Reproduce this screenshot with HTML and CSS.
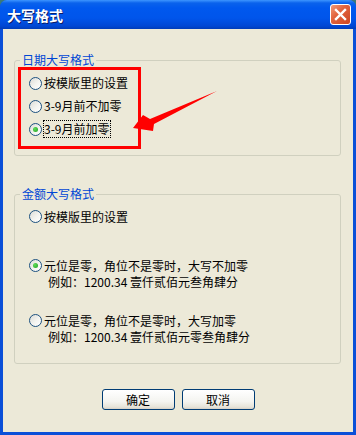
FILE: index.html
```html
<!DOCTYPE html>
<html lang="zh-CN">
<head>
  <meta charset="UTF-8">
  <title>大写格式</title>
  <link rel="stylesheet" href="styles.css">
</head>
<body>
  <div class="window">
    <div class="titlebar">
      <span class="title">大写格式</span>
      <span class="close-btn">
        <svg width="21" height="21" viewBox="0 0 21 21"><path d="M6 6 L15 15 M15 6 L6 15" stroke="#fff" stroke-width="2.4" stroke-linecap="square"/></svg>
      </span>
    </div>
    <div class="client">
      <!-- 日期 -->
      <fieldset class="group group-date">
        <legend>日期大写格式</legend>
        <div class="mark-box">
          <div class="row"><span class="radio"></span><span>按模版里的设置</span></div>
          <div class="row"><span class="radio"></span><span>3-9月前不加零</span></div>
          <div class="row"><span class="radio checked"></span><span class="focus">3-9月前加零</span></div>
        </div>
      </fieldset>
      <!-- 金额 -->
      <fieldset class="group group-money">
        <legend>金额大写格式</legend>
        <div class="money-row"><span class="radio"></span><div class="lines"><div>按模版里的设置</div></div></div>
        <div class="money-row"><span class="radio checked"></span><div class="lines"><div>元位是零，角位不是零时，大写不加零</div><div class="example">例如：1200.34 壹仟贰佰元叁角肆分</div></div></div>
        <div class="money-row"><span class="radio"></span><div class="lines"><div>元位是零，角位不是零时，大写加零</div><div class="example">例如：1200.34 壹仟贰佰元零叁角肆分</div></div></div>
      </fieldset>
      <div class="buttons">
        <button class="btn">确定</button>
        <button class="btn">取消</button>
      </div>
    </div>
    <svg class="arrow" width="356" height="435" viewBox="0 0 356 435">
      <polygon points="217,91 150,119 143,115 133,128 153,131 154,124" fill="#ff0000"/>
    </svg>
  </div>
</body>
</html>
```

FILE: styles.css
```css
body {
  margin: 0;
  background: #3b7a78;
  font-family: "Noto Sans CJK SC", "Liberation Sans", sans-serif;
  font-size: 12px;
  color: #000;
}
.window {
  position: relative;
  width: 356px;
  height: 435px;
  display: flex;
  flex-direction: column;
  background: #0a4fd8;
  border-radius: 7px 7px 0 0;
  overflow: hidden;
}
.titlebar {
  height: 29px;
  display: flex;
  align-items: center;
  justify-content: space-between;
  padding: 0 5px 0 7px;
  background: linear-gradient(to bottom, #3d95ff 0, #0a62ec 3px, #0058ee 8px, #0055eb 18px, #0047d4 26px, #003cb8 29px);
}
.title {
  color: #fff;
  font-weight: bold;
  font-size: 14px;
  text-shadow: 1px 1px 0 #0a1e6a;
}
.close-btn {
  width: 21px;
  height: 21px;
  box-sizing: border-box;
  border: 1px solid #fff;
  border-radius: 3px;
  background: linear-gradient(135deg, #f29a78 0%, #e2643e 40%, #cc4522 100%);
  display: flex;
  align-items: center;
  justify-content: center;
}
.close-btn svg { display: block; margin: -1px; }
.client {
  flex: 1;
  margin: 0 3px 3px 3px;
  background: #ece9d8;
  display: flex;
  flex-direction: column;
}
.group {
  margin: 0 12px 0 11px;
  padding: 0 0 6px 3px;
  border: 1px solid #d0d0bf;
  border-radius: 3px;
  min-width: 0;
}
.group legend {
  margin-left: 2px;
  padding: 0 2px;
  line-height: 14px;
  color: #0046d5;
}
.group-date { margin-top: 24px; }
.group-money {
  margin-top: 31px;
  padding-bottom: 18px;
}
.mark-box {
  width: 123px;
  box-sizing: border-box;
  border: 3px solid #ff0000;
  padding: 4px 0 8px 8px;
  display: flex;
  flex-direction: column;
  gap: 5px;
}
.row {
  display: flex;
  align-items: center;
  gap: 2px;
  height: 18px;
  line-height: 18px;
}
.focus {
  outline: 1px dotted #000;
  outline-offset: -1px;
  padding: 0 1px;
  margin-left: -1px;
}
.radio {
  flex: none;
  width: 13px;
  height: 13px;
  box-sizing: border-box;
  border: 1px solid #1c5180;
  border-radius: 50%;
  background: linear-gradient(135deg, #dcdcd7 0%, #f4f4f0 55%, #ffffff 100%);
  display: flex;
  align-items: center;
  justify-content: center;
}
.radio.checked::after {
  content: "";
  width: 5px;
  height: 5px;
  border-radius: 50%;
  background: radial-gradient(circle at 35% 35%, #5fdc5a, #21a121);
}
.money-row {
  display: flex;
  align-items: flex-start;
  gap: 2px;
  padding-left: 11px;
  line-height: 16px;
}
.money-row .radio { margin-top: 1px; }
.money-row:nth-of-type(1) { margin-top: 8px; }
.money-row:nth-of-type(2) { margin-top: 33px; }
.money-row:nth-of-type(3) { margin-top: 23px; }
.example { padding-left: 4px; }
.buttons {
  display: flex;
  justify-content: center;
  gap: 7px;
  margin-top: 25px;
}
.btn {
  width: 73px;
  height: 21px;
  padding: 0;
  border: 1px solid #003c74;
  border-radius: 3px;
  background: linear-gradient(to bottom, #ffffff 0%, #f4f4f0 60%, #e6e3d8 90%, #d6d0c5 100%);
  font-family: "Noto Sans CJK SC", "Liberation Sans", sans-serif;
  font-size: 12px;
  color: #000;
}
.arrow {
  position: absolute;
  left: 0;
  top: 0;
  pointer-events: none;
}
```
